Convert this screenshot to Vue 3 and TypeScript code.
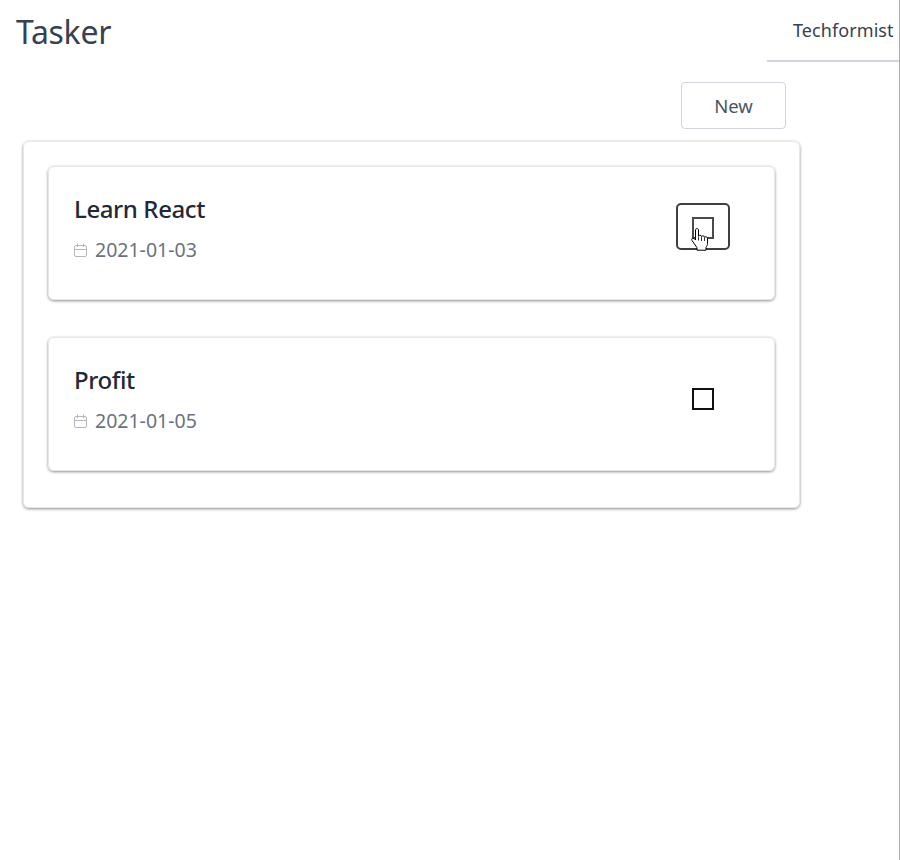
<script setup lang="ts">
interface Task { id: number; title: string; date: string; focused: boolean }
const tasks: Task[] = [
  { id: 1, title: 'Learn React', date: '2021-01-03', focused: true },
  { id: 2, title: 'Profit', date: '2021-01-05', focused: false },
]
</script>

<template>
  <div class="page">
    <header class="top">
      <h1 class="brand">Tasker</h1>
      <div class="user">Techformist</div>
    </header>
    <main class="content">
      <div class="actions">
        <button class="new" type="button">New</button>
      </div>
      <section class="board">
        <article v-for="t in tasks" :key="t.id" class="task">
          <div class="info">
            <h2 class="title">{{ t.title }}</h2>
            <div class="date">
              <svg class="cal" width="14" height="15" viewBox="0 0 14 15" fill="none" stroke="#b4b7bd" stroke-width="1">
                <rect x="0.5" y="2.500" width="12" height="11" rx="1.500" />
                <path d="M0.500 6.500h12M3.500 0.500v3.500M9.500 0.500v3.500" />
              </svg>
              <span>{{ t.date }}</span>
            </div>
          </div>
          <div class="check-wrap" :class="{ focused: t.focused }">
            <span class="box"></span>
            <svg v-if="t.focused" class="hand" width="18" height="23" viewBox="0 0 18 23">
              <path d="M4.500 2c0-2 3-2 3 0v6c.5-1 3-1 3 .5c.5-1 3-.8 3 .7c.5-.8 3-.5 3 1v5c0 2-.7 3-1.500 4v3H6v-2.500L1 12.500c-1-1.500.5-3 2-2l1.500 1.500z" fill="#fff" stroke="#000" stroke-width="1" stroke-linejoin="round" />
              <path d="M7.500 8.500v4M10.500 9v4M13.500 9.500v3.500" stroke="#000" stroke-width=".8" fill="none" />
            </svg>
          </div>
        </article>
      </section>
    </main>
  </div>
</template>

<style scoped>
.page {
  box-sizing: border-box;
  width: 900px;
  height: 860px;
  border-right: 1px solid #a9a9a9;
  background: #fff;
  font-family: "Noto Sans", "Open Sans", sans-serif;
  color: #374151;
  overflow: hidden;
}
.top {
  display: flex;
  justify-content: space-between;
  height: 62px;
}
.brand {
  margin: 11px 0 0 16px;
  font-size: 32px;
  line-height: 42px;
  font-weight: 400;
  letter-spacing: -0.3px;
  color: #374151;
}
.user {
  box-sizing: border-box;
  width: 132px;
  height: 62px;
  padding: 18px 0 0 26px;
  border-bottom: 2px solid #d1d5db;
  font-size: 18px;
  line-height: 25px;
  letter-spacing: 0.08px;
  white-space: nowrap;
}
.content {
  padding: 20px 0 0 23px;
  width: 777px;
}
.actions {
  display: flex;
  justify-content: flex-end;
  padding-right: 14px;
  margin-bottom: 12px;
}
.new {
  box-sizing: border-box;
  width: 105px;
  height: 47px;
  border: 1px solid #d1d5db;
  border-radius: 4px;
  background: #fff;
  font: inherit;
  font-size: 18.500px;
  color: #4b5563;
}
.board {
  box-sizing: border-box;
  width: 777px;
  height: 367px;
  padding: 24px 24px 0;
  border: 1px solid #e5e7eb;
  border-radius: 6px;
  box-shadow: 0 1px 3px rgba(0, 0, 0, 0.45);
  display: flex;
  flex-direction: column;
  gap: 37px;
}
.task {
  box-sizing: border-box;
  height: 134px;
  padding: 0 44px 0 25px;
  border: 1px solid #e5e7eb;
  border-radius: 6px;
  box-shadow: 0 1px 3px rgba(0, 0, 0, 0.45);
  display: flex;
  justify-content: space-between;
  align-items: center;
}
.info {
  display: flex;
  flex-direction: column;
  gap: 13px;
  padding-bottom: 11px;
}
.title {
  margin: 0;
  font-size: 24px;
  line-height: 32px;
  font-weight: 500;
  letter-spacing: -0.4px;
  color: #1f2937;
}
.date {
  display: flex;
  align-items: center;
  gap: 7px;
  font-size: 19.500px;
  line-height: 24px;
  color: #6b7280;
}
.check-wrap {
  box-sizing: border-box;
  position: relative;
  width: 54px;
  height: 47px;
  display: flex;
  align-items: center;
  justify-content: center;
  margin-top: -14px;
  border: 2px solid transparent;
  border-radius: 5px;
}
.check-wrap.focused {
  border-color: #3f3f3f;
}
.box {
  box-sizing: border-box;
  width: 22px;
  height: 22px;
  margin-top: 4px;
  border: 2px solid #111;
  background: #fff;
}
.focused .box {
  border-color: #4a4a4a;
}
.hand {
  position: absolute;
  left: 13px;
  top: 23px;
}
</style>
